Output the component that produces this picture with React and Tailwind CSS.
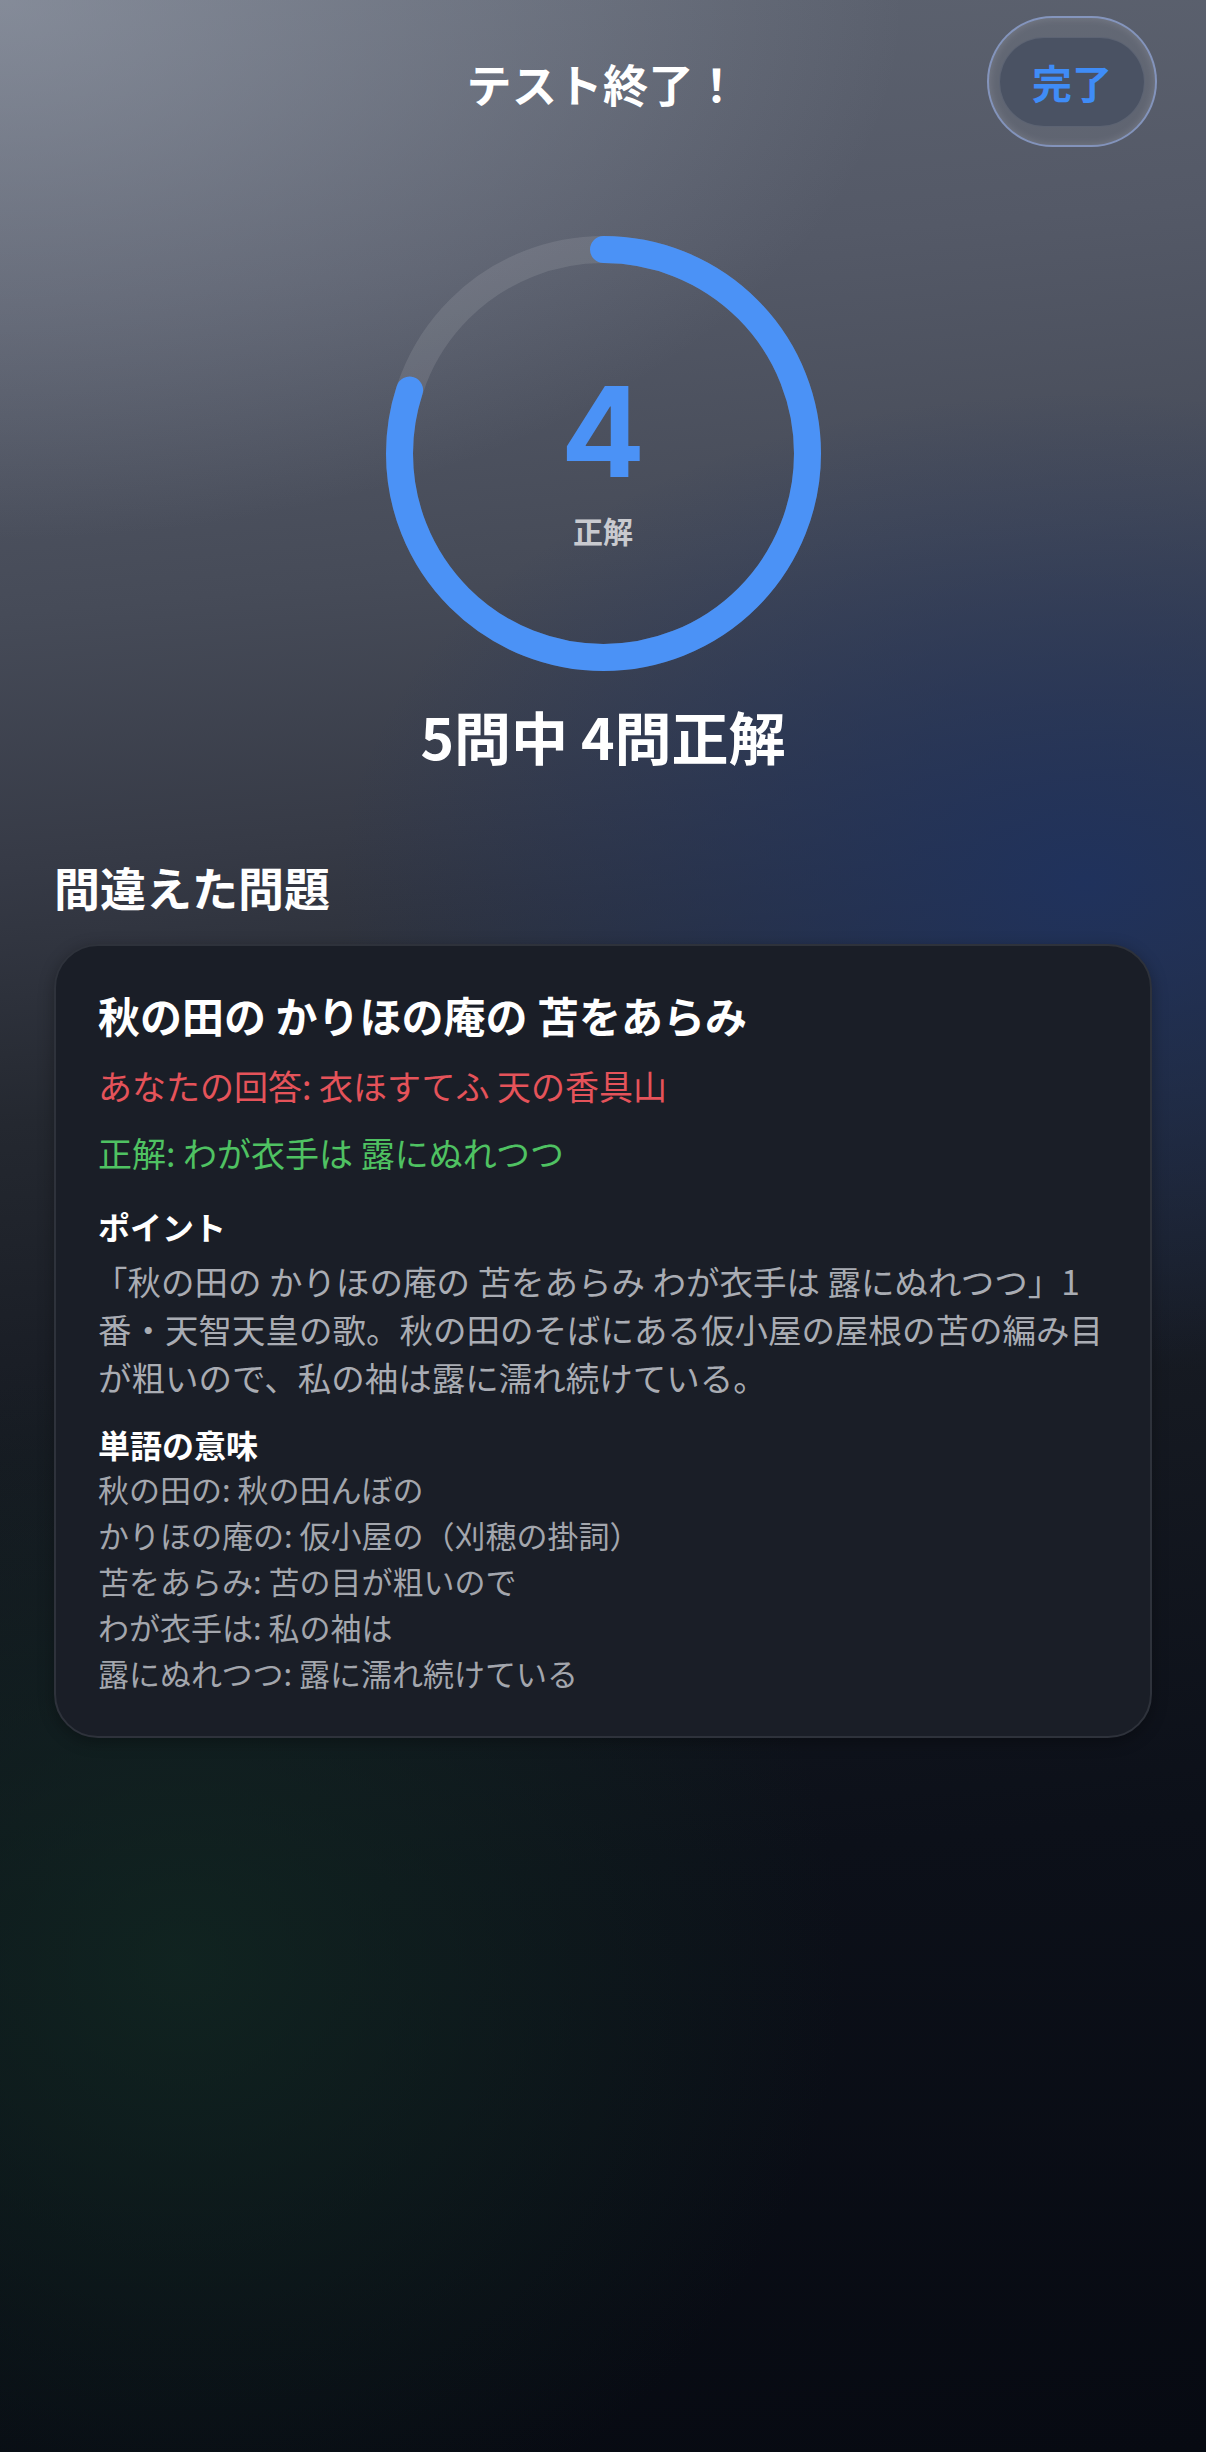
import React from "react";

const R = 204;
const C = 2 * Math.PI * R;

function Ring() {
  return (
    <div className="relative w-[435px] h-[435px]">
      <svg width="435" height="435" viewBox="0 0 435 435" className="block">
        <circle cx="217.5" cy="217.5" r={R} fill="none" stroke="rgba(255,255,255,0.1)" strokeWidth="27" />
        <circle
          cx="217.5"
          cy="217.5"
          r={R}
          fill="none"
          stroke="#4b92f6"
          strokeWidth="27"
          strokeLinecap="round"
          strokeDasharray={`${C * 0.8} ${C}`}
          transform="rotate(-90 217.5 217.5)"
        />
      </svg>
      <div className="absolute inset-0 flex flex-col items-center pt-[133px]">
        <div className="font-['Inter','Noto_Sans',sans-serif] font-bold text-[125px] leading-none text-[#4b92f6]">4</div>
        <div className="mt-[21px] text-[30px] leading-none font-semibold text-[#c9cacf]">正解</div>
      </div>
    </div>
  );
}

export default function App() {
  return (
    <div className="min-h-screen w-full font-['Noto_Sans_CJK_JP','Noto_Sans',sans-serif] text-white bg-[radial-gradient(ellipse_75%_22%_at_0%_0%,rgba(165,172,186,0.55),transparent),radial-gradient(ellipse_62%_20%_at_90%_36%,rgba(31,50,94,0.95),transparent),radial-gradient(ellipse_55%_25%_at_15%_80%,rgba(18,42,35,0.75),transparent),linear-gradient(175deg,#5d6370_0%,#545967_12%,#464b58_24%,#363a46_34%,#242830_44%,#161a22_57%,#0c1019_75%,#070a12_100%)]">
      <header className="relative h-[166px] flex items-center justify-center">
        <h1 className="text-[45px] leading-none font-bold tracking-[0.5px]">テスト終了！</h1>
        <div className="absolute top-[16px] right-[49px] w-[170px] h-[131px] rounded-full border-2 border-[#93a8dc]/70 bg-white/[0.06] shadow-[inset_0_0_8px_rgba(255,255,255,0.15)] flex items-center justify-center">
          <div className="w-[146px] h-[90px] rounded-full bg-[#4a5263] border border-white/10 flex items-center justify-center">
            <span className="text-[40px] leading-none font-bold text-[#3f8cf7]">完了</span>
          </div>
        </div>
      </header>

      <div className="mt-[70px] flex justify-center">
        <Ring />
      </div>

      <p className="mt-[30px] text-center text-[57px] leading-[68px] font-bold">5問中 4問正解</p>

      <div className="px-[54px]">
        <h2 className="mt-[89px] text-[46px] leading-[56px] font-bold">間違えた問題</h2>

        <div className="mt-[30px] rounded-[44px] border-2 border-[#2e323b] bg-[#1a1e27] pt-[44px] pb-[40px] pl-[42px] pr-[30px] shadow-[0_4px_16px_rgba(0,0,0,0.3)]">
          <p className="text-[42px] leading-[50px] font-semibold text-white">秋の田の かりほの庵の 苫をあらみ</p>
          <p className="mt-[24px] text-[34px] leading-[44px] text-[#e5535a]">あなたの回答: 衣ほすてふ 天の香具山</p>
          <p className="mt-[23px] text-[34px] leading-[44px] text-[#4fc262]">正解: わが衣手は 露にぬれつつ</p>

          <p className="mt-[29px] text-[32px] leading-[44px] font-bold text-white">ポイント</p>
          <p className="mt-[9px] text-[33.5px] leading-[48px] text-[#a9acb3] -ml-[4px]">
            「秋の田の かりほの庵の 苫をあらみ わが衣手は 露にぬれつつ」1
            <br />
            <span className="ml-[4px]">番・天智天皇の歌。秋の田のそばにある仮小屋の屋根の苫の編み目</span>
            <br />
            <span className="ml-[4px]">が粗いので、私の袖は露に濡れ続けている。</span>
          </p>

          <p className="mt-[21px] text-[32px] leading-[44px] font-bold text-white">単語の意味</p>
          <div className="text-[31px] leading-[46px] text-[#a3a6ad]">
            <p>秋の田の: 秋の田んぼの</p>
            <p>かりほの庵の: 仮小屋の（刈穂の掛詞）</p>
            <p>苫をあらみ: 苫の目が粗いので</p>
            <p>わが衣手は: 私の袖は</p>
            <p>露にぬれつつ: 露に濡れ続けている</p>
          </div>
        </div>
      </div>
    </div>
  );
}
